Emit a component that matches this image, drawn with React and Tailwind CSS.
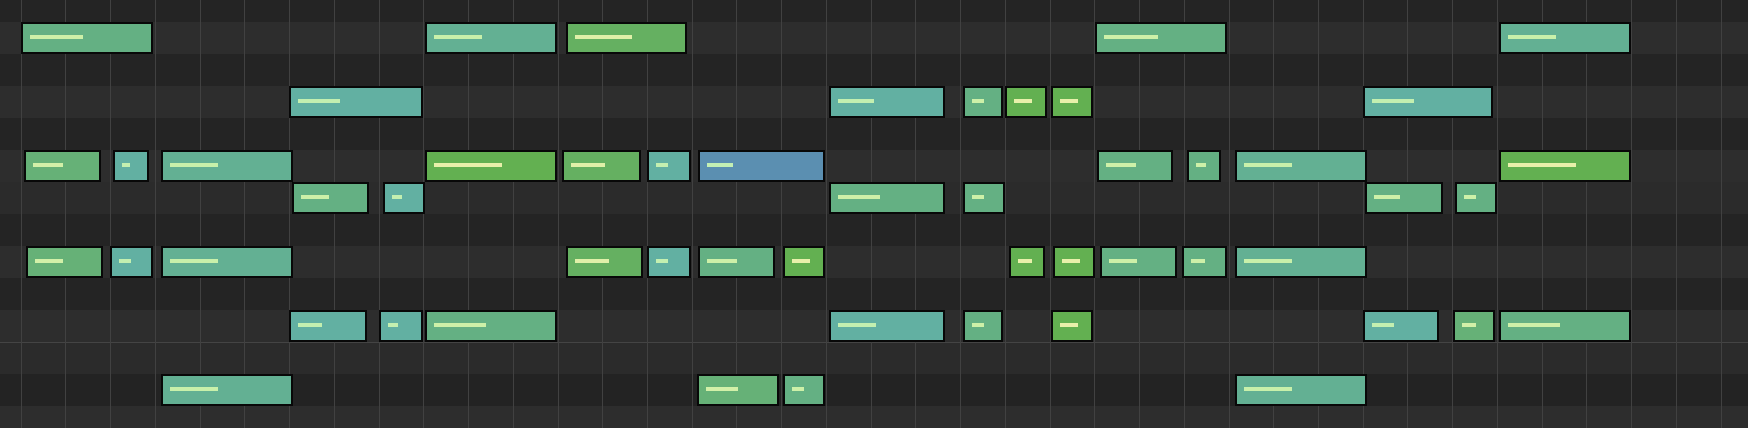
import React from 'react';

// key rows, top to bottom (A#, A, G#, G, F#, F, E, D#, D, C#, C | B, A#, A)
const ROWS = [
  'h-[22px] bg-[#242424]',
  'h-8 bg-[#2d2d2d]',
  'h-8 bg-[#242424]',
  'h-8 bg-[#2d2d2d]',
  'h-8 bg-[#242424]',
  'h-8 bg-[#2d2d2d]',
  'h-8 bg-[#2b2b2b]',
  'h-8 bg-[#242424]',
  'h-8 bg-[#2d2d2d]',
  'h-8 bg-[#242424]',
  'h-8 bg-[#2d2d2d]',
  'h-8 bg-[#2b2b2b] border-t border-[#444444]',
  'h-8 bg-[#232323]',
  'h-[22px] bg-[#2d2d2d]',
];

const TONES = {
  B: { box: 'bg-[#5b8fb1]', dash: 'bg-[#c3efb4]' },
  T: { box: 'bg-[#62b0a2]', dash: 'bg-[#c3efb0]' },
  TG: { box: 'bg-[#63b093]', dash: 'bg-[#c8f0aa]' },
  GT: { box: 'bg-[#64b083]', dash: 'bg-[#cdf0a8]' },
  GL: { box: 'bg-[#66b177]', dash: 'bg-[#d2f0a8]' },
  G: { box: 'bg-[#65b061]', dash: 'bg-[#e0f0a8]' },
  BG: { box: 'bg-[#63b051]', dash: 'bg-[#e8f0aa]' },
};

const ROW_TOP = { 1: 22, 3: 86, 5: 150, 6: 182, 8: 246, 10: 310, 12: 374 };

// [row, left, right, tone, dash length]
const NOTES = [
  [1, 21, 153, 'GT', 53],
  [1, 425, 557, 'TG', 48],
  [1, 566, 687, 'G', 57],
  [1, 1095, 1227, 'GT', 54],
  [1, 1499, 1631, 'TG', 48],

  [3, 289, 423, 'T', 42],
  [3, 829, 945, 'T', 36],
  [3, 963, 1003, 'GT', 12],
  [3, 1005, 1047, 'BG', 18],
  [3, 1051, 1093, 'BG', 18],
  [3, 1363, 1493, 'T', 42],

  [5, 24, 101, 'GL', 30],
  [5, 113, 149, 'T', 8],
  [5, 161, 293, 'TG', 48],
  [5, 425, 557, 'BG', 68],
  [5, 562, 641, 'G', 34],
  [5, 647, 691, 'T', 12],
  [5, 698, 825, 'B', 26],
  [5, 1097, 1173, 'GT', 30],
  [5, 1187, 1221, 'GT', 10],
  [5, 1235, 1367, 'TG', 48],
  [5, 1499, 1631, 'BG', 68],

  [6, 292, 369, 'GT', 28],
  [6, 383, 425, 'T', 10],
  [6, 829, 945, 'GT', 42],
  [6, 963, 1005, 'GT', 12],
  [6, 1365, 1443, 'GT', 26],
  [6, 1455, 1497, 'GT', 12],

  [8, 26, 103, 'GL', 28],
  [8, 110, 153, 'T', 12],
  [8, 161, 293, 'TG', 48],
  [8, 566, 643, 'G', 34],
  [8, 647, 691, 'T', 12],
  [8, 698, 775, 'GT', 30],
  [8, 783, 825, 'BG', 18],
  [8, 1009, 1045, 'BG', 14],
  [8, 1053, 1095, 'BG', 18],
  [8, 1100, 1177, 'GT', 28],
  [8, 1182, 1227, 'GT', 14],
  [8, 1235, 1367, 'TG', 48],

  [10, 289, 367, 'T', 24],
  [10, 379, 423, 'T', 10],
  [10, 425, 557, 'GT', 52],
  [10, 829, 945, 'T', 38],
  [10, 963, 1003, 'GT', 12],
  [10, 1051, 1093, 'BG', 18],
  [10, 1363, 1439, 'T', 22],
  [10, 1453, 1495, 'GL', 14],
  [10, 1499, 1631, 'GT', 52],

  [12, 161, 293, 'TG', 48],
  [12, 697, 779, 'GL', 32],
  [12, 783, 825, 'GT', 12],
  [12, 1235, 1367, 'TG', 48],
];

const Note = ({ row, left, right, tone, dash }) => {
  const t = TONES[tone];
  return (
    <div
      className={`absolute h-8 border-2 border-[#080808] ${t.box}`}
      style={{ top: ROW_TOP[row], left, width: right - left }}
    >
      <div className={`absolute top-[11px] left-[7px] h-1 ${t.dash}`} style={{ width: dash }} />
    </div>
  );
};

export default function App() {
  return (
    <div className="relative w-[1748px] h-[428px] overflow-hidden bg-[#242424]">
      <div className="flex flex-col">
        {ROWS.map((cls, i) => (
          <div key={i} className={`w-full ${cls}`} />
        ))}
      </div>

      {/* beat lines */}
      <div className="absolute inset-0 flex pl-[20.7px]">
        {Array.from({ length: 39 }).map((_, i) => (
          <div key={i} className="w-[44.74px] shrink-0 h-full border-l border-[#414141]" />
        ))}
      </div>

      {NOTES.map(([row, left, right, tone, dash], i) => (
        <Note key={i} row={row} left={left} right={right} tone={tone} dash={dash} />
      ))}
    </div>
  );
}
